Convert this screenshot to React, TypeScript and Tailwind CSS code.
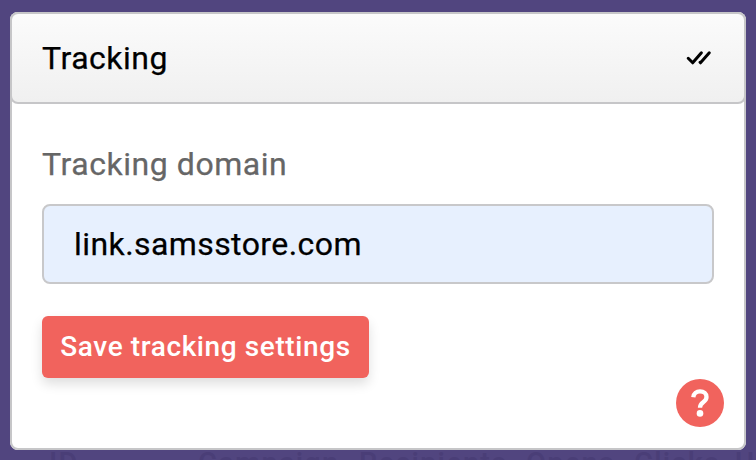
const columns = [
  { label: "ID", className: "left-[49px]" },
  { label: "Campaign", className: "left-[198px]" },
  { label: "Recipients", className: "left-[359px]" },
  { label: "Opens", className: "left-[526px]" },
  { label: "Clicks", className: "left-[634px]" },
  { label: "Unsubscribes", className: "left-[735px]" },
];

function DoubleCheck() {
  return (
    <svg
      width="28"
      height="18"
      viewBox="0 0 28 18"
      fill="none"
      stroke="currentColor"
      strokeWidth="3"
      strokeLinecap="round"
      strokeLinejoin="round"
    >
      <path d="M2.2 9.3 6.7 13.8 15.4 3.8" />
      <path d="M14 13.3 14.5 13.8 23.3 3.8" />
    </svg>
  );
}

export default function App() {
  return (
    <div className="relative h-[460px] w-[756px] overflow-hidden bg-[#51457f] px-2.5 pt-3 font-[Roboto,sans-serif]">
      {/* Dimmed table header behind the dialog */}
      <div className="text-[29px] leading-[34px] font-medium tracking-[1.2px] text-[#4a3e77]">
        {columns.map((column) => (
          <span key={column.label} className={`absolute top-[446px] ${column.className}`}>
            {column.label}
          </span>
        ))}
      </div>

      <section className="relative h-[438px] rounded-lg bg-white shadow-[inset_0_0_0_2px_#c6c6c8]">
        <header className="flex h-[92px] items-center justify-between rounded-lg border-2 border-[#c6c6c8] bg-linear-to-b from-[#fbfbfb] to-[#f0f0f0] pr-[30px] pl-[30px] text-black">
          <h1 className="text-[32px] leading-10 tracking-[0.5px] [-webkit-text-stroke:0.25px]">Tracking</h1>
          <DoubleCheck />
        </header>

        <form className="px-8 pt-10">
          <label
            htmlFor="domain"
            className="block text-[32px] leading-10 tracking-[0.55px] text-[#666] [-webkit-text-stroke:0.25px]"
          >
            Tracking domain
          </label>
          <input
            id="domain"
            type="text"
            defaultValue="link.samsstore.com"
            className="mt-5 block h-20 w-full rounded-lg border-2 border-[#c8c8ca] bg-[#e7f0fe] px-[30px] text-[32px] tracking-[0.42px] text-black outline-none [-webkit-text-stroke:0.25px]"
          />
          <button
            type="button"
            className="mt-8 flex h-[62px] w-[327px] items-center justify-center rounded-md bg-[#f1635d] text-[28px] font-medium tracking-[0.6px] whitespace-nowrap text-white shadow-[0_6px_12px_rgba(0,0,0,0.13)]"
          >
            Save tracking settings
          </button>
        </form>

        <button
          type="button"
          aria-label="Help"
          className="absolute right-[22px] bottom-[23.5px] flex size-12 items-center justify-center rounded-full bg-[#f1635d] text-white"
        >
          <svg width="48" height="48" viewBox="0 0 48 48" fill="none">
            <path
              d="M17.3 18.2C17.7 14.5 20.4 12.4 24 12.4C27.9 12.4 30.5 14.7 30.5 18C30.5 20.5 29.1 21.8 27.2 23.2C25.1 24.7 24 25.8 24 28.7"
              stroke="currentColor"
              strokeWidth="4.3"
            />
            <circle cx="24" cy="34.4" r="3.3" fill="currentColor" />
          </svg>
        </button>
      </section>
    </div>
  );
}
